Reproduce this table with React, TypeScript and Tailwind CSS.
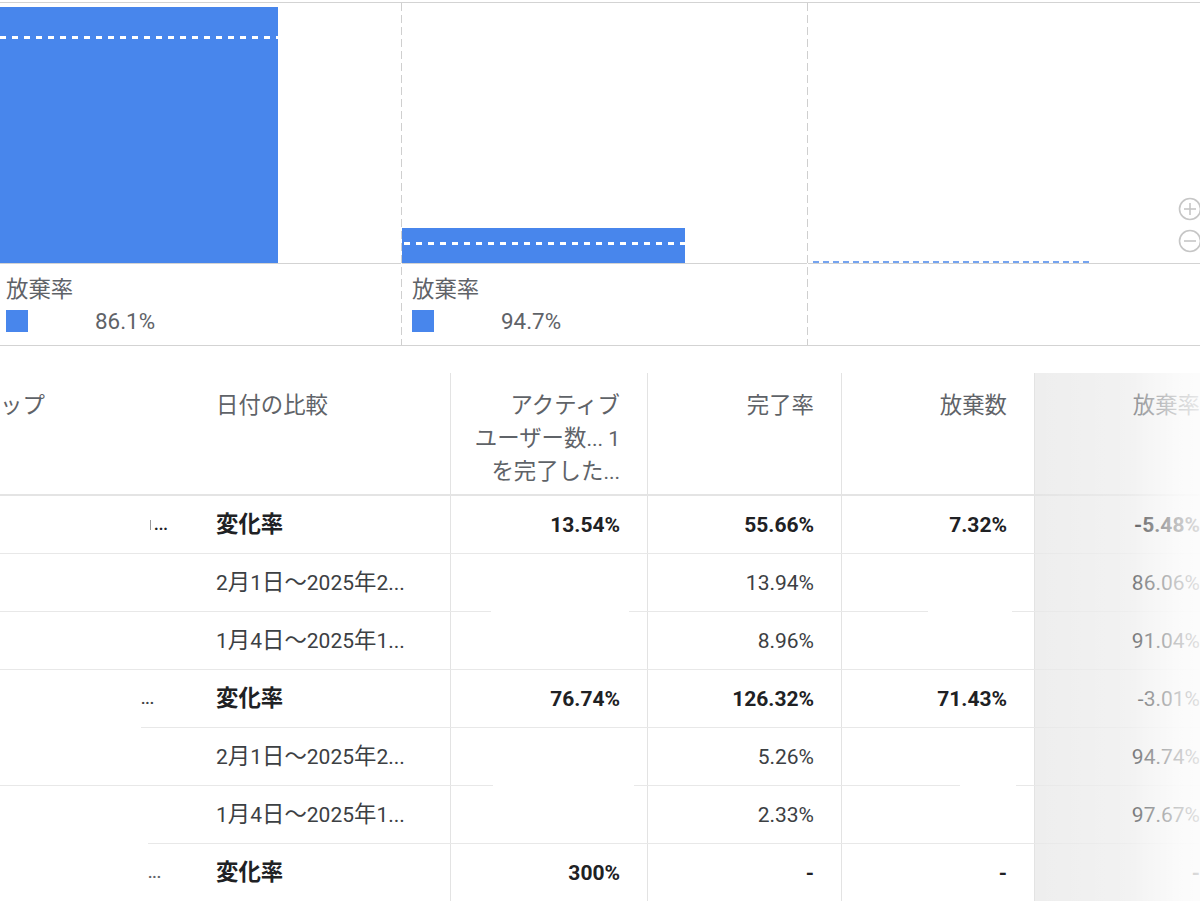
import React from "react";

const BLUE = "#4886ec";

function Mixed({ text }: { text: string }) {
  const parts = text.match(/[\u3000-\u9fff\uff00-\uffef]+|[^\u3000-\u9fff\uff00-\uffef]+/g) || [];
  return (
    <>
      {parts.map((p, i) =>
        /[\u3000-\u9fff\uff00-\uffef]/.test(p) ? (
          <span key={i} className="text-[22.4px]">
            {p}
          </span>
        ) : (
          <span key={i}>{p}</span>
        )
      )}
    </>
  );
}

function ChartPanel1() {
  return (
    <svg width="401" height="260" className="block">
      <rect x="0" y="4" width="278" height="256" fill={BLUE} />
      <line x1="0" y1="34.5" x2="278" y2="34.5" stroke="#ffffff" strokeWidth="3" strokeDasharray="6 6" />
    </svg>
  );
}

function ChartPanel2() {
  return (
    <svg width="405" height="260" className="block">
      <rect x="0" y="225" width="283" height="35" fill={BLUE} />
      <line x1="2" y1="240.5" x2="283" y2="240.5" stroke="#ffffff" strokeWidth="3" strokeDasharray="6 6" />
    </svg>
  );
}

function ChartPanel3() {
  return (
    <svg width="392" height="260" className="block">
      <line x1="5" y1="259" x2="282" y2="259" stroke={BLUE} strokeWidth="1.5" strokeDasharray="6 4" />
      <g stroke="#c6c6c6" strokeWidth="1.6" fill="none">
        <circle cx="382" cy="206" r="10.5" />
        <line x1="376" y1="206" x2="388" y2="206" />
        <line x1="382" y1="200" x2="382" y2="212" />
        <circle cx="382" cy="238" r="10.5" />
        <line x1="376" y1="238" x2="388" y2="238" />
      </g>
    </svg>
  );
}

function Legend({ value, pad }: { value: string; pad: "a" | "b" }) {
  return (
    <div className={pad === "a" ? "pl-[6px] pt-[11px]" : "pl-[10px] pt-[11px]"}>
      <div className="text-[22.4px] leading-[28px] text-[#5f6368]">放棄率</div>
      <div className="mt-[6px] flex items-center">
        <div className="h-[22px] w-[22px] bg-[#4886ec]" />
        <div className="ml-[67px] text-[22.4px] leading-[24px] text-[#5f6368]">{value}</div>
      </div>
    </div>
  );
}

function DashedSep() {
  return (
    <div className="w-px shrink-0 self-stretch bg-[repeating-linear-gradient(to_bottom,#cfcfcf_0px,#cfcfcf_8px,transparent_8px,transparent_12px)]" />
  );
}

type Row = {
  a?: React.ReactNode;
  b: string;
  bold: boolean;
  c: string;
  d: string;
  e: string;
  f: string;
  fBold?: boolean;
};

const rows: Row[] = [
  {
    a: (
      <div className="flex items-center pl-[150px] text-[#202124]">
        <span className="mr-[3px] inline-block h-[10px] w-px bg-[#9a9a9a]" />
        <span className="text-[16px] font-bold leading-none">...</span>
      </div>
    ),
    b: "変化率",
    bold: true,
    c: "13.54%",
    d: "55.66%",
    e: "7.32%",
    f: "-5.48%",
    fBold: true,
  },
  { b: "2月1日～2025年2...", bold: false, c: "", d: "13.94%", e: "", f: "86.06%" },
  { b: "1月4日～2025年1...", bold: false, c: "", d: "8.96%", e: "", f: "91.04%" },
  {
    a: (
      <div className="pl-[141px] text-[#3c4043]">
        <span className="text-[15px] font-bold leading-none">...</span>
      </div>
    ),
    b: "変化率",
    bold: true,
    c: "76.74%",
    d: "126.32%",
    e: "71.43%",
    f: "-3.01%",
    fBold: false,
  },
  { b: "2月1日～2025年2...", bold: false, c: "", d: "5.26%", e: "", f: "94.74%" },
  { b: "1月4日～2025年1...", bold: false, c: "", d: "2.33%", e: "", f: "97.67%" },
  {
    a: (
      <div className="pl-[148px] text-[#5f6368]">
        <span className="text-[15px] font-bold leading-none">...</span>
      </div>
    ),
    b: "変化率",
    bold: true,
    c: "300%",
    d: "-",
    e: "-",
    f: "-",
    fBold: true,
  },
];

function Sep({ i }: { i: number }) {
  const line = "h-px bg-[#e8e8e8]";
  if (i === 1) {
    return (
      <div className="flex h-px">
        <div className={"w-[491px] " + line} />
        <div className="w-[138px]" />
        <div className={"w-[299px] " + line} />
        <div className="w-[84px]" />
        <div className={"flex-1 " + line} />
      </div>
    );
  }
  if (i === 3) {
    return (
      <div className="flex h-px">
        <div className="w-[141px]" />
        <div className={"flex-1 " + line} />
      </div>
    );
  }
  if (i === 4) {
    return (
      <div className="flex h-px">
        <div className={"w-[493px] " + line} />
        <div className="w-[141px]" />
        <div className={"w-[326px] " + line} />
        <div className="w-[56px]" />
        <div className={"flex-1 " + line} />
      </div>
    );
  }
  if (i === 5) {
    return (
      <div className="flex h-px">
        <div className="w-[148px]" />
        <div className={"flex-1 " + line} />
      </div>
    );
  }
  return <div className={line} />;
}

function TableRow({ r }: { r: Row }) {
  const num = r.bold
    ? "text-[21px] font-bold text-[#202124]"
    : "text-[21px] text-[#3c4043]";
  return (
    <div className="flex h-[57px] items-stretch leading-[28px]">
      <div className="flex w-[196px] shrink-0 items-center">{r.a}</div>
      <div className="flex w-[254px] shrink-0 items-center pl-[20px]">
        <span className={r.bold ? "text-[21px] font-bold text-[#202124]" : "text-[21px] text-[#3c4043]"}>
          <Mixed text={r.b} />
        </span>
      </div>
      <div className="flex w-[197px] shrink-0 items-center justify-end border-l border-[#e3e3e3] pr-[27px]">
        <span className={num}>{r.c}</span>
      </div>
      <div className="flex w-[194px] shrink-0 items-center justify-end border-l border-[#e3e3e3] pr-[27px]">
        <span className={num}>{r.d}</span>
      </div>
      <div className="flex w-[193px] shrink-0 items-center justify-end border-l border-[#e3e3e3] pr-[27px]">
        <span className={num}>{r.e}</span>
      </div>
      <div className="flex w-[193px] shrink-0 items-center justify-end border-l border-[#e3e3e3] bg-[#eeeeee] pr-[27px]">
        <span className={r.fBold ? "text-[21px] font-bold text-[#202124]" : "text-[21px] text-[#3c4043]"}>{r.f}</span>
      </div>
    </div>
  );
}

export default function App() {
  return (
    <div className="relative h-[901px] w-[1200px] overflow-hidden bg-white font-[family-name:Roboto,'Noto_Sans_CJK_JP',sans-serif]">
      {/* Chart strip */}
      <div className="flex h-[346px] flex-col">
        <div className="h-[2px]" />
        <div className="flex flex-1 border-y border-[#d3d3d3]">
          <div className="flex w-[401px] shrink-0 flex-col">
            <div className="border-b border-[#d3d3d3]">
              <ChartPanel1 />
            </div>
            <Legend value="86.1%" pad="a" />
          </div>
          <DashedSep />
          <div className="flex w-[405px] shrink-0 flex-col">
            <div className="border-b border-[#d3d3d3]">
              <ChartPanel2 />
            </div>
            <Legend value="94.7%" pad="b" />
          </div>
          <DashedSep />
          <div className="flex flex-1 flex-col">
            <div className="border-b border-[#d3d3d3]">
              <ChartPanel3 />
            </div>
          </div>
        </div>
      </div>

      <div className="h-[27px]" />

      {/* Table */}
      <div className="relative w-[1227px]">
        <div className="flex h-[123px] border-b-2 border-[#e4e4e4] text-[21px] leading-[32px] text-[#5f6368]">
          <div className="w-[196px] shrink-0 pt-[16px]">
            <Mixed text="ップ" />
          </div>
          <div className="w-[254px] shrink-0 pl-[20px] pt-[16px]">
            <Mixed text="日付の比較" />
          </div>
          <div className="flex w-[197px] shrink-0 flex-col items-end border-l border-[#e3e3e3] pr-[27px] pt-[16px]">
            <span>
              <Mixed text="アクティブ" />
            </span>
            <span>
              <Mixed text="ユーザー数... 1" />
            </span>
            <span>
              <Mixed text="を完了した..." />
            </span>
          </div>
          <div className="w-[194px] shrink-0 border-l border-[#e3e3e3] pr-[27px] pt-[16px] text-right">
            <Mixed text="完了率" />
          </div>
          <div className="w-[193px] shrink-0 border-l border-[#e3e3e3] pr-[27px] pt-[16px] text-right">
            <Mixed text="放棄数" />
          </div>
          <div className="w-[193px] shrink-0 border-l border-[#e3e3e3] bg-[#eeeeee] pr-[27px] pt-[16px] text-right">
            <Mixed text="放棄率" />
          </div>
        </div>
        {rows.map((r, i) => (
          <React.Fragment key={i}>
            <TableRow r={r} />
            <Sep i={i} />
          </React.Fragment>
        ))}
        <div className="pointer-events-none absolute inset-y-0 left-[1034px] w-[166px] bg-[linear-gradient(to_right,rgba(255,255,255,0)_0%,rgba(255,255,255,0.22)_55%,rgba(255,255,255,0.5)_72%,rgba(255,255,255,0.72)_86%,rgba(255,255,255,0.85)_100%)]" />
      </div>
    </div>
  );
}
